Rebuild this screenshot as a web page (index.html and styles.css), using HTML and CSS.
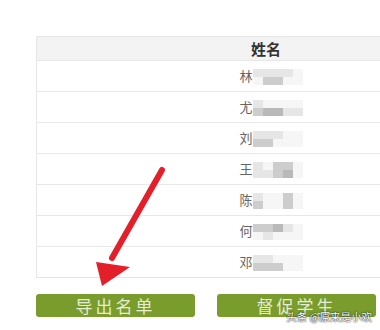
FILE: index.html
```html
<!DOCTYPE html>
<html lang="zh">
<head>
  <meta charset="UTF-8">
  <meta name="viewport" content="width=device-width, initial-scale=1.0">
  <link rel="stylesheet" href="styles.css">
</head>
<body>
  <div class="page">
    <table class="roster">
      <thead>
        <tr><th>姓名</th></tr>
      </thead>
      <tbody>
        <tr><td><span class="name">林</span><span class="mosaic"><i class="s1"></i><i class="s1"></i><i class="s1"></i><i class="s1"></i><i class="s0"></i><i class="s0"></i><i class="s2"></i><i class="s2"></i><i class="s0"></i><i class="s0"></i></span></td></tr>
        <tr><td><span class="name">尤</span><span class="mosaic"><i class="s1"></i><i class="s0"></i><i class="s0"></i><i class="s0"></i><i class="s0"></i><i class="s2"></i><i class="s3"></i><i class="s3"></i><i class="s1"></i><i class="s1"></i></span></td></tr>
        <tr><td><span class="name">刘</span><span class="mosaic"><i class="s1"></i><i class="s1"></i><i class="s1"></i><i class="s0"></i><i class="s0"></i><i class="s2"></i><i class="s2"></i><i class="s0"></i><i class="s0"></i><i class="s0"></i></span></td></tr>
        <tr><td><span class="name">王</span><span class="mosaic"><i class="s1"></i><i class="s0"></i><i class="s2"></i><i class="s2"></i><i class="s0"></i><i class="s1"></i><i class="s1"></i><i class="s2"></i><i class="s3"></i><i class="s0"></i></span></td></tr>
        <tr><td><span class="name">陈</span><span class="mosaic"><i class="s1"></i><i class="s0"></i><i class="s0"></i><i class="s2"></i><i class="s0"></i><i class="s2"></i><i class="s0"></i><i class="s0"></i><i class="s2"></i><i class="s0"></i></span></td></tr>
        <tr><td><span class="name">何</span><span class="mosaic"><i class="s2"></i><i class="s2"></i><i class="s3"></i><i class="s1"></i><i class="s0"></i><i class="s0"></i><i class="s1"></i><i class="s0"></i><i class="s0"></i><i class="s0"></i></span></td></tr>
        <tr><td><span class="name">邓</span><span class="mosaic"><i class="s1"></i><i class="s1"></i><i class="s0"></i><i class="s0"></i><i class="s0"></i><i class="s2"></i><i class="s2"></i><i class="s2"></i><i class="s0"></i><i class="s0"></i></span></td></tr>
      </tbody>
    </table>

    <div class="actions">
      <button class="btn">导出名单</button>
      <button class="btn">督促学生</button>
    </div>

    <!-- red pointer drawn over the table -->
    <svg class="arrow" width="380" height="330" viewBox="0 0 380 330">
      <line x1="162" y1="170" x2="112" y2="258" stroke="#e3202a" stroke-width="6" stroke-linecap="round"/>
      <polygon points="102,286 96,262 130,267" fill="#e3202a"/>
    </svg>

    <div class="mark">头条 @原来是小欢</div>
  </div>
</body>
</html>
```

FILE: styles.css
```css
html, body {
  margin: 0;
  padding: 0;
  background: #fff;
}

.page {
  position: relative;
  width: 380px;
  height: 330px;
  overflow: hidden;
  padding: 36px 0 0 36px;
  box-sizing: border-box;
  font-family: "Noto Sans CJK SC", "Noto Sans", sans-serif;
}

.roster {
  width: 460px;
  border-collapse: collapse;
  border: 1px solid #e6e6e6;
}

.roster th {
  height: 23px;
  padding: 0;
  background: #f3f3f3;
  color: #333;
  font-size: 15px;
  font-weight: 700;
  line-height: 18px;
  text-align: center;
}

.roster td {
  height: 30px;
  padding: 0;
  border-top: 1px solid #e8e8e8;
  text-align: center;
  vertical-align: middle;
  color: #666;
  font-size: 13px;
  line-height: 16px;
}

.name {
  vertical-align: middle;
}

.mosaic {
  display: inline-grid;
  grid-template-columns: repeat(5, 10px);
  grid-template-rows: 8px 8px;
  vertical-align: middle;
  margin-right: -10px;
}

.mosaic i {
  display: block;
}

.s0 { background: #f6f6f6; }
.s1 { background: #e6e6e6; }
.s2 { background: #cdcdcd; }
.s3 { background: #b9b9b9; }

.actions {
  display: flex;
  gap: 22px;
  margin-top: 16px;
}

.btn {
  width: 159px;
  height: 23px;
  padding: 0;
  border: none;
  border-radius: 3px;
  background: #7a9c2c;
  color: #e4ecd4;
  font-family: "Noto Sans CJK SC", sans-serif;
  font-size: 17px;
  letter-spacing: 3px;
  line-height: 23px;
}

.arrow {
  position: absolute;
  left: 0;
  top: 0;
}

.mark {
  position: absolute;
  right: 8px;
  bottom: 6px;
  color: #fff;
  font-size: 10.5px;
  text-shadow: 0 0 2px #333, 0 0 1px #000;
}
```
